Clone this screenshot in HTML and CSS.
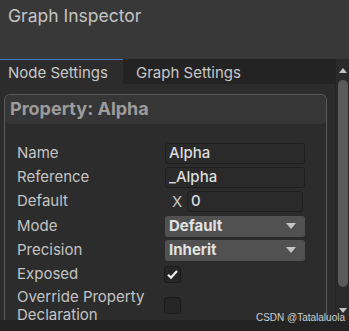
FILE: index.html
```html
<!DOCTYPE html>
<html>
<head>
  <title>Graph Inspector</title>
  <link rel="stylesheet" href="styles.css">
</head>
<body>
  <div class="window">
    <div class="titlebar">Graph Inspector</div>
    <div class="main">
      <div class="left">
        <div class="tabs">
          <div class="tab active">Node Settings</div>
          <div class="tab">Graph Settings</div>
        </div>
        <div class="content">
          <div class="panel">
            <div class="panel-header">Property: Alpha</div>
            <div class="rows">
              <div class="row">
                <span class="label">Name</span>
                <div class="field"><div class="input">Alpha</div></div>
              </div>
              <div class="row">
                <span class="label">Reference</span>
                <div class="field"><div class="input">_Alpha</div></div>
              </div>
              <div class="row">
                <span class="label">Default</span>
                <div class="field vec">
                  <span class="axis">X</span>
                  <div class="input short">0</div>
                </div>
              </div>
              <div class="row gap">
                <span class="label">Mode</span>
                <div class="field"><div class="dropdown">Default<span class="arrow"></span></div></div>
              </div>
              <div class="row">
                <span class="label">Precision</span>
                <div class="field"><div class="dropdown">Inherit<span class="arrow"></span></div></div>
              </div>
              <div class="row">
                <span class="label">Exposed</span>
                <div class="field">
                  <div class="checkbox">
                    <svg width="13" height="13" viewBox="0 0 13 13"><path d="M2 6.8 L5 9.6 L11 3" fill="none" stroke="#f0f0f0" stroke-width="2.2"/></svg>
                  </div>
                </div>
              </div>
              <div class="row tall">
                <span class="label">Override Property<br>Declaration</span>
                <div class="field"><div class="checkbox"></div></div>
              </div>
            </div>
          </div>
        </div>
      </div>
      <div class="scrollbar">
        <span class="up"></span>
        <div class="thumb"></div>
        <span class="down"></span>
      </div>
    </div>
    <div class="footer"></div>
    <div class="watermark">CSDN @Tatalaluola</div>
  </div>
</body>
</html>
```

FILE: styles.css
```css
body {
  margin: 0;
  background-color: #2c2c2c;
  font-family: Inter, "Noto Sans", sans-serif;
}

.window {
  width: 349px;
  height: 331px;
  display: flex;
  flex-direction: column;
  overflow: hidden;
  position: relative;
}

.titlebar {
  height: 59px;
  background-color: #383838;
  color: #c4c4c4;
  font-size: 17.5px;
  padding: 5px 0 0 8px;
  box-sizing: border-box;
}

.main {
  flex: 1;
  display: flex;
  min-height: 0;
}

.left {
  flex: 1;
  display: flex;
  flex-direction: column;
  min-width: 0;
}

.tabs {
  height: 25px;
  display: flex;
  background-color: #232323;
}

.tab {
  padding: 3px 0 0 9px;
  box-sizing: border-box;
  color: #c8c8c8;
  font-size: 15px;
  border-top: 1px solid #232323;
}

.tab.active {
  width: 123px;
  padding-left: 8px;
  background-color: #2c2c2c;
  border-top: 1px solid #3c7ac0;
}

.tab + .tab {
  padding-left: 13px;
}

.content {
  flex: 1;
  background-color: #2c2c2c;
  padding: 10px 8px 0 4px;
  overflow: hidden;
  border-right: 1px solid #262626;
}

.panel {
  border: 1px solid #5a5a5a;
  border-bottom: none;
  border-radius: 6px 6px 0 0;
  height: 260px;
}

.panel-header {
  height: 29px;
  background-color: #363636;
  border-radius: 5px;
  color: #9c9c9c;
  font-weight: bold;
  font-size: 18px;
  padding: 3px 0 0 5px;
  box-sizing: border-box;
}

.rows {
  padding: 17px 0 0 12px;
}

.row {
  display: flex;
  align-items: center;
  height: 24px;
}

.row.gap {
  margin-top: 1px;
}

.row.tall {
  height: 40px;
  align-items: flex-start;
}

.label {
  width: 148px;
  color: #c4c4c4;
  font-size: 15px;
  line-height: 18px;
}

.row.tall .label {
  margin-top: 2px;
}

.field {
  display: flex;
  align-items: center;
}

.row.tall .field {
  margin-top: 11px;
}

.input {
  width: 140px;
  height: 21px;
  box-sizing: border-box;
  background-color: #2a2a2a;
  border: 1px solid #1f1f1f;
  border-radius: 3px;
  color: #dcdcdc;
  font-size: 15px;
  font-weight: 500;
  line-height: 18px;
  padding: 0 0 0 3px;
}

.input.short {
  width: 116px;
}

.axis {
  width: 22px;
  padding-left: 7px;
  box-sizing: border-box;
  color: #c4c4c4;
  font-size: 15px;
}

.dropdown {
  width: 140px;
  height: 21px;
  box-sizing: border-box;
  background-color: #515151;
  border-radius: 3px;
  color: #e2e2e2;
  font-size: 15px;
  font-weight: bold;
  line-height: 20px;
  padding: 0 0 0 4px;
  display: flex;
  justify-content: space-between;
}

.arrow {
  width: 0;
  height: 0;
  margin: 7px 9px 0 0;
  border-left: 5px solid transparent;
  border-right: 5px solid transparent;
  border-top: 6px solid #c4c4c4;
}

.checkbox {
  width: 17px;
  height: 17px;
  box-sizing: border-box;
  background-color: #262626;
  border: 1px solid #1b1b1b;
  border-radius: 3px;
  margin-left: -1px;
  display: flex;
  align-items: center;
  justify-content: center;
}

.scrollbar {
  width: 13px;
  background-color: #2a2a2a;
  display: flex;
  flex-direction: column;
  align-items: center;
}

.up, .down {
  width: 0;
  height: 0;
  border-left: 4px solid transparent;
  border-right: 4px solid transparent;
}

.up {
  margin-top: 9px;
  border-bottom: 5px solid #c4c4c4;
}

.down {
  margin-top: auto;
  margin-bottom: 7px;
  border-top: 5px solid #c4c4c4;
}

.thumb {
  width: 10px;
  height: 207px;
  margin-top: 7px;
  background-color: #5a5a5a;
  border-radius: 5px;
}

.footer {
  height: 11px;
  background-color: #232323;
}

.watermark {
  position: absolute;
  right: 4px;
  bottom: 7px;
  color: #cfcfcf;
  font-family: "Liberation Sans", Arial, sans-serif;
  font-size: 10px;
  line-height: 12px;
}
```
